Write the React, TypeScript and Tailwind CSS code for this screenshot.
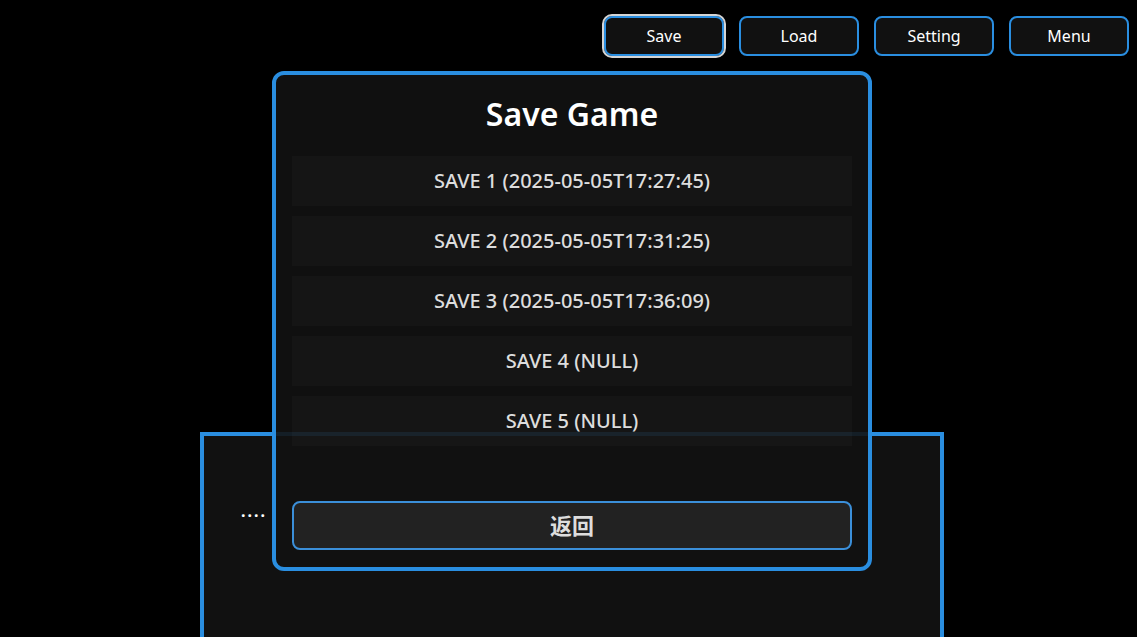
import React from "react";

// ============================================================
// Data
// ============================================================

const navItems = ["Save", "Load", "Setting", "Menu"];

const saveSlots = [
  "SAVE 1 (2025-05-05T17:27:45)",
  "SAVE 2 (2025-05-05T17:31:25)",
  "SAVE 3 (2025-05-05T17:36:09)",
  "SAVE 4 (NULL)",
  "SAVE 5 (NULL)",
];

const font = { fontFamily: '"Noto Sans", "Noto Sans CJK SC", sans-serif' };

// ============================================================
// App
// ============================================================

export default function App() {
  return (
    <div className="relative w-[1137px] h-[637px] overflow-hidden bg-black text-white" style={font}>
      {/* Top nav */}
      <div className="flex justify-end gap-[15px] pt-4 pr-2">
        {navItems.map((label, i) => (
          <button
            key={label}
            className={
              "w-[120px] h-[40px] rounded-lg border-2 border-[#2a8ee0] bg-[#111111] text-[16px] text-white " +
              (i === 0 ? "outline-2 outline-[#d4d4d4]" : "")
            }
          >
            {label}
          </button>
        ))}
      </div>

      {/* Dialogue box behind the modal */}
      <div className="ml-[200px] mt-[376px] w-[744px] h-[220px] border-4 border-[#2a8ee0] bg-[#111111] pl-[37px] pt-[63px]">
        <span className="text-[16px] font-bold tracking-[2px] text-white">....</span>
      </div>

      {/* Save modal */}
      <div className="absolute left-[272px] top-[71px] w-[600px] h-[500px] flex flex-col rounded-xl border-4 border-[#2a8ee0] bg-[#121212]/90 px-4 pt-4 pb-[17px]">
        <h2 className="h-[44px] leading-[46px] mb-[21px] text-center text-[32px] font-semibold text-white">
          Save Game
        </h2>

        <div className="flex-1 flex flex-col gap-[10px]">
          {saveSlots.map((slot) => (
            <div
              key={slot}
              className="h-[50px] flex items-center justify-center bg-white/[0.025] text-[20px] font-medium text-[#dddddd]"
            >
              {slot}
            </div>
          ))}
        </div>

        <button className="h-[49px] rounded-lg border-2 border-[#3b8fd9] bg-[#222222] text-[22px] font-bold text-[#dddddd]">
          返回
        </button>
      </div>
    </div>
  );
}
